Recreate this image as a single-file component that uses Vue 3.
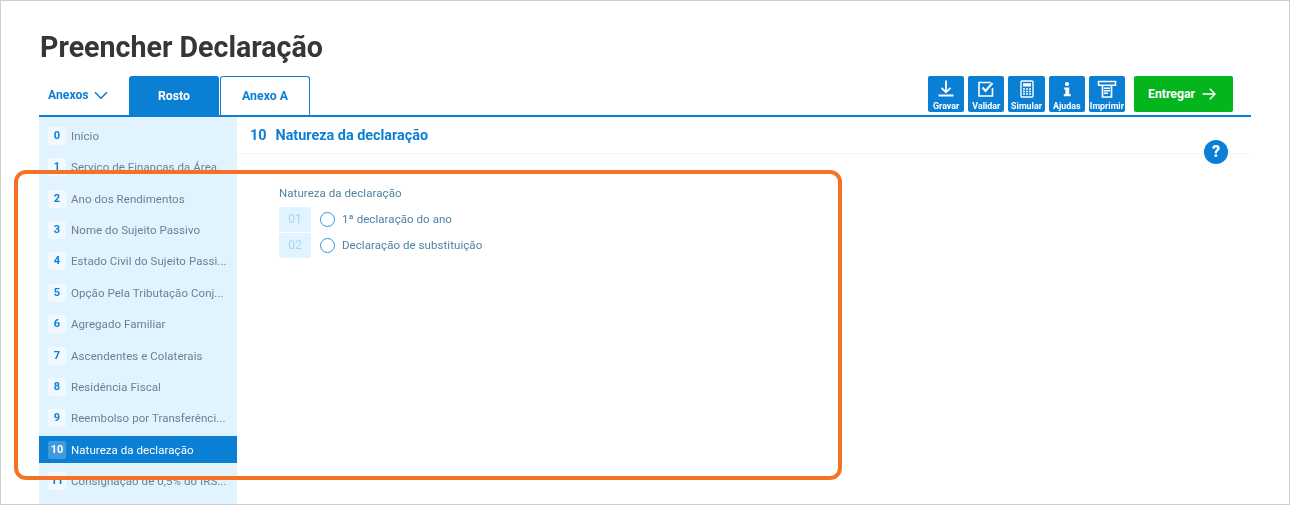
<script setup>
const sections = [
  { n: 0, label: 'Início' },
  { n: 1, label: 'Serviço de Finanças da Área...' },
  { n: 2, label: 'Ano dos Rendimentos' },
  { n: 3, label: 'Nome do Sujeito Passivo' },
  { n: 4, label: 'Estado Civil do Sujeito Passi...' },
  { n: 5, label: 'Opção Pela Tributação Conj...' },
  { n: 6, label: 'Agregado Familiar' },
  { n: 7, label: 'Ascendentes e Colaterais' },
  { n: 8, label: 'Residência Fiscal' },
  { n: 9, label: 'Reembolso por Transferênci...' },
  { n: 10, label: 'Natureza da declaração', active: true },
  { n: 11, label: 'Consignação de 0,5% do IRS...' },
]

const options = [
  { code: '01', label: '1ª declaração do ano' },
  { code: '02', label: 'Declaração de substituição' },
]

const tools = ['Gravar', 'Validar', 'Simular', 'Ajudas', 'Imprimir']
</script>

<template>
  <div class="frame">
    <h1 class="title soft">Preencher Declaração</h1>

    <div class="tabbar soft">
      <div class="anexos">
        Anexos
        <svg width="14" height="9" viewBox="0 0 14 9"><path d="M1 1.2 7 7.2 13 1.2" fill="none" stroke="#0a7fd4" stroke-width="1.6" /></svg>
      </div>
      <div class="tab tab-on">Rosto</div>
      <div class="tab">Anexo A</div>

      <div class="tools">
        <div v-for="t in tools" :key="t" class="tool">
          <svg width="20" height="20" viewBox="0 0 20 20" fill="none" stroke="#fff">
            <template v-if="t === 'Gravar'">
              <path d="M10 1.5V13M5.5 8.8 10 13.3 14.5 8.8" stroke-width="1.8" />
              <path d="M2.5 16.5H17.5" stroke-width="1.8" />
            </template>
            <template v-else-if="t === 'Validar'">
              <path d="M16.5 9V17H3V3.5H14.5" stroke-width="1.6" />
              <path d="M6.5 8.5 9.5 12 16.5 4" stroke-width="2" />
            </template>
            <template v-else-if="t === 'Simular'">
              <rect x="4" y="2" width="12" height="16" rx="1" stroke-width="1.4" />
              <path d="M6 4.2H14V7.5H6Z" fill="#fff" stroke="none" />
              <path d="M6 10H14M6 12.5H14M6 15H14" stroke-width="1.5" stroke-dasharray="2 1" />
            </template>
            <template v-else-if="t === 'Ajudas'">
              <circle cx="10" cy="5" r="2.1" fill="#fff" stroke="none" />
              <path d="M7.2 8.6H12.2V15H13.6V17.2H6.8V15H8.4V10.6H7.2Z" fill="#fff" stroke="none" />
            </template>
            <template v-else>
              <path d="M1.5 2.5H18.5V6.2H1.5Z" stroke-width="1.5" />
              <path d="M5.5 6V18H14.5V6" stroke-width="1.7" />
              <path d="M7 9.2H13M7 11.7H13M7 14.2H11" stroke-width="1.4" />
            </template>
          </svg>
          <span>{{ t }}</span>
        </div>
        <div class="submit">
          Entregar
          <svg width="14" height="12" viewBox="0 0 14 12"><path d="M0.5 6H13M7.8 0.8 13 6 7.8 11.2" fill="none" stroke="#fff" stroke-width="1.4" /></svg>
        </div>
      </div>
    </div>

    <div class="body soft">
      <nav class="side">
        <div v-for="s in sections" :key="s.n" class="row" :class="{ 'row-on': s.active }">
          <span class="num">{{ s.n }}</span>
          <span class="row-label">{{ s.label }}</span>
        </div>
      </nav>

      <main class="main">
        <div class="head">
          <span class="head-n">10</span>
          <span>Natureza da declaração</span>
          <div class="help">?</div>
        </div>
        <div class="field">
          <div class="field-label">Natureza da declaração</div>
          <div v-for="o in options" :key="o.code" class="opt">
            <span class="code">{{ o.code }}</span>
            <span class="radio"></span>
            <span class="opt-label">{{ o.label }}</span>
          </div>
        </div>
      </main>
    </div>

    <div class="callout"></div>
  </div>
</template>

<style>
html, body {
  margin: 0;
  background: #fff;
  overflow: hidden;
}
</style>

<style scoped>
.frame {
  position: relative;
  box-sizing: border-box;
  width: 1290px;
  height: 505px;
  padding: 0 38px 0 38px;
  border: 1px solid #cfcfcf;
  overflow: hidden;
  font-family: Roboto, "Liberation Sans", sans-serif;
  background: #fff;
}

/* the reference is a slightly upscaled capture */
.soft {
  filter: blur(0.35px);
}

.title {
  margin: 0 0 0 1px;
  padding-top: 28px;
  height: 47px;
  font-size: 28.6px;
  line-height: 36px;
  font-weight: 700;
  color: #363636;
}

.tabbar {
  display: flex;
  align-items: flex-end;
  height: 39px;
  border-bottom: 2px solid #0a7fd4;
}

.anexos {
  display: flex;
  align-items: center;
  gap: 5px;
  width: 90px;
  height: 38px;
  padding-left: 9px;
  padding-bottom: 2px;
  box-sizing: border-box;
  font-size: 12.2px;
  font-weight: 700;
  color: #0a7fd4;
}

.tab {
  box-sizing: border-box;
  width: 90px;
  height: 39px;
  margin-right: 1px;
  border: 1px solid #0a7fd4;
  border-bottom: 0;
  border-radius: 3px 3px 0 0;
  text-align: center;
  line-height: 39px;
  font-size: 12.3px;
  font-weight: 700;
  color: #0a7fd4;
}

.tab-on {
  background: #0a7fd4;
  color: #fff;
}

.tools {
  display: flex;
  gap: 4px;
  margin-left: auto;
  margin-right: 18px;
  align-self: flex-start;
}

.tool {
  display: flex;
  flex-direction: column;
  align-items: center;
  box-sizing: border-box;
  width: 36.2px;
  height: 36px;
  padding-top: 3px;
  border-radius: 2px;
  background: #0a7fd4;
  color: #fff;
  font-size: 8.9px;
  font-weight: 700;
  white-space: nowrap;
  overflow: hidden;
}

.tool span {
  margin-top: 2px;
  line-height: 10px;
}

.submit {
  display: flex;
  align-items: center;
  gap: 7px;
  box-sizing: border-box;
  width: 99px;
  height: 36px;
  margin-left: 5px;
  padding-left: 14px;
  border-radius: 2px;
  background: #05b51e;
  color: #fff;
  font-size: 12.3px;
  font-weight: 700;
}

.body {
  display: flex;
}

.side {
  flex: none;
  width: 198px;
  padding-top: 5.4px;
  background: #e0f3ff;
  height: 400px;
}

.row {
  display: flex;
  align-items: center;
  gap: 5px;
  height: 27px;
  margin-bottom: 4.4px;
  padding-left: 9px;
  font-size: 11.5px;
  letter-spacing: 0.06px;
  color: #6c8093;
  white-space: nowrap;
}

.row-on {
  background: #0a7fd4;
  color: #fff;
}

.num {
  flex: none;
  width: 18px;
  height: 18px;
  border-radius: 2px;
  background: #f1f9ff;
  text-align: center;
  line-height: 18px;
  font-size: 11px;
  font-weight: 700;
  letter-spacing: 0;
  color: #0a7fd4;
}

.row-on .num {
  background: #3f9bde;
  color: #fff;
}

.main {
  flex: 1;
  min-width: 0;
}

.head {
  position: relative;
  display: flex;
  gap: 9px;
  height: 36px;
  padding-left: 13px;
  border-bottom: 1px solid #eaf7fb;
  line-height: 37px;
  font-size: 14.4px;
  font-weight: 700;
  color: #0a7fd4;
}

.help {
  position: absolute;
  right: 23px;
  top: 23px;
  width: 24px;
  height: 24px;
  border-radius: 50%;
  background: #0a7fd4;
  color: #fff;
  text-align: center;
  line-height: 24px;
  font-size: 16px;
  font-weight: 900;
}

.field {
  padding: 32px 0 0 42px;
  font-size: 11.5px;
  letter-spacing: 0.06px;
  color: #4f82a3;
}

.field-label {
  height: 21px;
  line-height: 15px;
}

.opt {
  display: flex;
  align-items: center;
  height: 25px;
  margin-bottom: 1px;
}

.opt-label {
  position: relative;
  top: -1px;
}

.code {
  width: 32px;
  height: 25px;
  margin-right: 9px;
  border-radius: 2px;
  background: #e0f3ff;
  color: #a9d5f2;
  text-align: center;
  line-height: 25px;
  font-size: 12px;
}

.radio {
  box-sizing: border-box;
  width: 15px;
  height: 15px;
  margin-right: 7px;
  margin-top: -1px;
  border: 1.5px solid #2d96dc;
  border-radius: 50%;
}

.callout {
  position: absolute;
  left: 13px;
  top: 169px;
  box-sizing: border-box;
  width: 828px;
  height: 310px;
  border: 4px solid #f57224;
  border-radius: 12px;
  pointer-events: none;
}
</style>
